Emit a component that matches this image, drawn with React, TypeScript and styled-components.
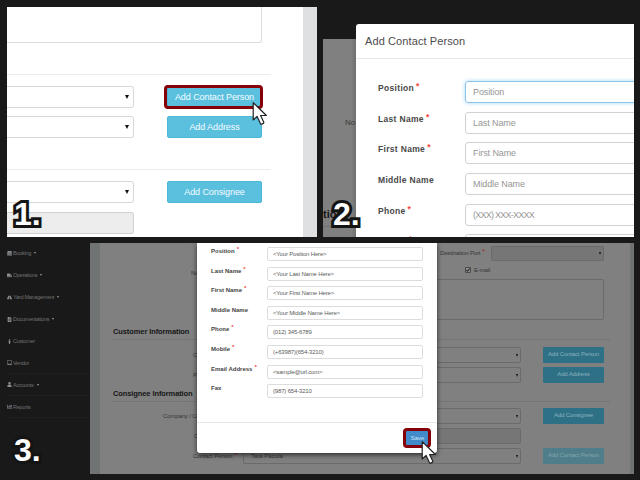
import React from "react";
import styled, { createGlobalStyle, css } from "styled-components";
import {
  FaBook,
  FaTruck,
  FaRoad,
  FaFileAlt,
  FaMale,
  FaTabletAlt,
  FaUser,
  FaChartBar,
} from "react-icons/fa";

const GlobalStyle = createGlobalStyle`
  * { box-sizing: border-box; }
  body { margin: 0; background: #191919; font-family: "Liberation Sans", Arial, sans-serif; }
`;

const Page = styled.main`
  width: 640px;
  height: 480px;
  padding: 7px 6px 6px 7px;
  background: #191919;
  display: grid;
  grid-template-rows: 230px 231px;
  row-gap: 6px;
  overflow: hidden;
`;

const TopSteps = styled.div`
  display: grid;
  grid-template-columns: 310px 311px;
  column-gap: 6px;
`;

const StepNumber = styled.span<{ $left: number; $top: number }>`
  position: absolute;
  left: ${(p) => p.$left}px;
  top: ${(p) => p.$top}px;
  font-size: 32px;
  line-height: 32px;
  font-weight: bold;
  color: #fff;
  -webkit-text-stroke: 6px #141414;
  paint-order: stroke fill;
  stroke-linejoin: round;
`;

const CursorSvg = styled.svg<{ $left: number; $top: number }>`
  position: absolute;
  left: ${(p) => p.$left}px;
  top: ${(p) => p.$top}px;
  width: 16px;
  height: 25px;
`;

const Cursor = ({ left, top }: { left: number; top: number }) => (
  <CursorSvg $left={left} $top={top} viewBox="0 0 16 25">
    <path
      d="M1.2 1.6V19l3.9-3.6 3.3 7.2q.5.9 1.4.5l1.5-.7q.8-.5.4-1.4l-3.1-6.5h5.8z"
      fill="#fff"
      stroke="#222"
      strokeWidth="1.2"
      strokeLinejoin="round"
    />
  </CursorSvg>
);

const Highlight = styled.div<{ $left: number; $top: number; $w: number; $h: number }>`
  position: absolute;
  left: ${(p) => p.$left}px;
  top: ${(p) => p.$top}px;
  width: ${(p) => p.$w}px;
  height: ${(p) => p.$h}px;
  border: 3px solid #860008;
  border-radius: 4px;
`;

/* Step 1: order form */

const FormCrop = styled.section`
  position: relative;
  display: grid;
  grid-template-columns: 296px 14px;
  background: #fff;
  overflow: hidden;
`;

const PageGutter = styled.div`
  background: #dfe0e2;
`;

const FormBody = styled.div`
  display: flex;
  flex-direction: column;
`;

const NotesBox = styled.div`
  width: 255px;
  height: 36px;
  border: solid #ddd;
  border-width: 0 1px 1px 0;
  border-radius: 0 0 3px 0;
`;

const Rule = styled.div<{ $gap: number }>`
  width: 264px;
  height: 1px;
  margin-top: ${(p) => p.$gap}px;
  background: #ebebeb;
`;

const FormRow = styled.div<{ $gap: number }>`
  display: grid;
  grid-template-columns: 127px 95px;
  column-gap: 33px;
  height: 22px;
  margin-top: ${(p) => p.$gap}px;
`;

const SelectBox = styled.div<{ $disabled?: boolean }>`
  display: flex;
  align-items: center;
  justify-content: flex-end;
  padding-right: 4px;
  border: 1px solid ${(p) => (p.$disabled ? "#d0d0d0" : "#d8d8d8")};
  border-left: 0;
  border-radius: 0 3px 3px 0;
  background: ${(p) => (p.$disabled ? "#ededed" : "#fff")};
`;

const Arrow = styled.span<{ $size: number }>`
  border: solid transparent;
  border-width: ${(p) => p.$size}px ${(p) => p.$size / 2}px 0;
  border-top-color: #111;
`;

const InfoButton = styled.div`
  display: flex;
  align-items: center;
  justify-content: center;
  border: 1px solid #4bb8d8;
  border-radius: 2px;
  background: #5bc0de;
  color: #f4fcff;
  font-size: 9px;
  letter-spacing: -0.08px;
  white-space: nowrap;
`;

/* Step 2: empty dialog */

const DialogCrop = styled.section`
  position: relative;
  display: grid;
  grid-template-columns: 33px 278px;
  overflow: hidden;
`;

const DimmedEdge = styled.div`
  margin-top: 32px;
  display: flex;
  flex-direction: column;
  overflow: hidden;
  background: linear-gradient(90deg, #808080 85%, #707070);
  color: #3a3a3a;
`;

const EdgeLabel = styled.div`
  margin: 78px 0 0 22px;
  font-size: 8px;
  line-height: 12px;
`;

const EdgeHeading = styled.div`
  margin-top: 79px;
  padding-bottom: 5px;
  border-bottom: 1px solid #727272;
  color: #151515;
  font-size: 11px;
  line-height: 13px;
  font-weight: bold;
`;

const Dialog = styled.div`
  margin-top: 17px;
  border-radius: 3px 0 0 0;
  background: #fff;
  overflow: hidden;
`;

const DialogTitle = styled.div`
  height: 35px;
  padding: 0 9px;
  border-bottom: 1px solid #e8e8e8;
  color: #4c4c4c;
  font-size: 11px;
  line-height: 35px;
  letter-spacing: 0.1px;
`;

const DialogFields = styled.div`
  padding: 22px 0 0 22px;
`;

const DialogRow = styled.div`
  display: grid;
  grid-template-columns: 87px 180px;
  height: 30.7px;
`;

const DialogLabel = styled.div`
  padding-top: 1px;
  color: #484848;
  font-size: 8.5px;
  line-height: 13px;
  font-weight: bold;
  letter-spacing: 0.32px;
`;

const Star = styled.sup`
  margin-left: 2px;
  color: #f4443c;
  font-size: 1em;
  line-height: 0;
  vertical-align: 2px;
  font-weight: bold;
`;

const DialogInput = styled.div<{ $focus?: boolean; $tight?: boolean }>`
  height: 22px;
  padding-left: 7px;
  border: 1px solid #d2d2d2;
  border-radius: 3px;
  color: #969696;
  font-size: 9px;
  line-height: 20px;
  letter-spacing: ${(p) => (p.$tight ? "-0.75px" : "-0.1px")};
  ${(p) =>
    p.$focus &&
    css`
      border-color: #8cc4ee;
      box-shadow: 0 0 4px #a8d6f5;
    `}
`;

const emptyFields = [
  { label: "Position", hint: "Position", required: true },
  { label: "Last Name", hint: "Last Name", required: true },
  { label: "First Name", hint: "First Name", required: true },
  { label: "Middle Name", hint: "Middle Name", required: false },
  { label: "Phone", hint: "(XXX) XXX-XXXX", required: true, tight: true },
  { label: "Mobile", hint: "", required: true },
];

/* Step 3: filled dialog over the full page */

const AppShell = styled.section`
  position: relative;
  display: grid;
  grid-template-columns: 83px 544px;
`;

const Sidebar = styled.nav`
  color: #707070;
  font-size: 5.6px;
  letter-spacing: -0.3px;
`;

const NavItem = styled.div<{ $line?: boolean }>`
  display: flex;
  align-items: center;
  gap: 1px;
  height: 21.9px;
  border-bottom: 1px solid ${(p) => (p.$line ? "#1f1f1f" : "transparent")};
  white-space: nowrap;
  svg {
    height: 5px;
    width: auto;
    flex: none;
    color: #8a8a8a;
  }
`;

const Caret = styled.i`
  margin-left: 2px;
  border: 2px solid transparent;
  border-width: 2px 1.5px 0;
  border-top-color: #999;
`;

const navItems = [
  { label: "Booking", icon: FaBook, menu: true },
  { label: "Operations", icon: FaTruck, menu: true },
  { label: "Yard Management", icon: FaRoad, menu: true },
  { label: "Documentations", icon: FaFileAlt, menu: true },
  { label: "Customer", icon: FaMale },
  { label: "Vendor", icon: FaTabletAlt, line: true },
  { label: "Accounts", icon: FaUser, menu: true, line: true },
  { label: "Reports", icon: FaChartBar, line: true },
];

const Screen = styled.div`
  position: relative;
  display: grid;
  grid-template-columns: 10px 530px 4px;
  background: #808080;
  overflow: hidden;
`;

const Gutter = styled.div`
  background: #707373;
`;

const DimForm = styled.div`
  padding: 3px 0 0 13px;
  color: #363636;
  font-size: 6px;
  letter-spacing: -0.15px;
  white-space: nowrap;
`;

const PortRow = styled.div`
  display: grid;
  grid-template-columns: 51px 113px;
  padding-left: 327px;
  height: 14px;
  line-height: 15px;
`;

const MailRow = styled.div`
  display: flex;
  align-items: center;
  gap: 3px;
  margin-top: 4px;
  padding-left: 352px;
  height: 12px;
`;

const Check = styled.span`
  display: flex;
  width: 6px;
  height: 6px;
  border: 1px solid #4a4a4a;
  background: #8c8c8c;
  border-radius: 1px;
  svg {
    width: 4px;
    height: 4px;
  }
`;

const RemarksRow = styled.div`
  display: grid;
  grid-template-columns: 130px 361px;
  height: 41px;
  margin-top: 3px;
`;

const RemarksLabel = styled.span`
  padding-left: 78px;
  margin-top: -11px;
  line-height: 10px;
`;

const DimBox = styled.div<{ $disabled?: boolean }>`
  display: flex;
  align-items: center;
  justify-content: space-between;
  padding: 0 2px 0 7px;
  border: 1px solid #6b6b6b;
  border-radius: 2px;
  background: ${(p) => (p.$disabled ? "#767676" : "transparent")};
  letter-spacing: 0.05px;
`;

const DimHeading = styled.div<{ $gap: number }>`
  width: 497px;
  height: 14px;
  margin-top: ${(p) => p.$gap}px;
  border-bottom: 1px solid #757575;
  color: #161616;
  font-size: 7.5px;
  line-height: 12px;
  letter-spacing: -0.1px;
  font-weight: bold;
`;

const DimRow = styled.div<{ $gap: number }>`
  display: grid;
  grid-template-columns: 130px 278px 22px 61px;
  height: 14px;
  margin-top: ${(p) => p.$gap}px;
`;

const DimLabel = styled.div<{ $indent: number }>`
  padding-left: ${(p) => p.$indent}px;
  line-height: 16px;
`;

const DimStar = styled.sup`
  margin-left: 2px;
  color: #a11f1c;
  font-size: 7px;
  line-height: 0;
  vertical-align: 1px;
`;

const DimButton = styled.div<{ $faded?: boolean }>`
  grid-column: 4;
  display: flex;
  align-items: center;
  justify-content: center;
  padding-bottom: 2px;
  border-radius: 1px;
  background: ${(p) => (p.$faded ? "#4f7d89" : "#2e7187")};
  color: ${(p) => (p.$faded ? "#86a5ad" : "#8bb0bb")};
  font-size: 6px;
`;

const FilledDialog = styled.div`
  position: absolute;
  left: 107px;
  top: 0;
  width: 240px;
  height: 210px;
  display: flex;
  flex-direction: column;
  background: #fff;
  border-radius: 0 0 3px 3px;
  box-shadow: 0 2px 5px rgba(0, 0, 0, 0.65);
`;

const FilledFields = styled.div`
  height: 180px;
  padding: 4px 0 0 14px;
  border-bottom: 1px solid #e8e8e8;
`;

const FilledRow = styled.div`
  display: grid;
  grid-template-columns: 56px 156px;
  height: 19.6px;
`;

const FilledLabel = styled.div`
  color: #444;
  font-size: 6px;
  line-height: 8px;
  font-weight: bold;
  white-space: nowrap;
`;

const FilledInput = styled.div`
  height: 14px;
  padding-left: 5px;
  border: 1px solid #dcdcdc;
  border-radius: 2px;
  color: #5c5c5c;
  font-size: 6px;
  line-height: 12px;
  letter-spacing: -0.17px;
`;

const FilledFooter = styled.div`
  display: flex;
  justify-content: flex-end;
  padding: 8px 8px 0 0;
`;

const SaveButton = styled.div`
  width: 23px;
  height: 14px;
  background: #428bca;
  color: #cfe6f8;
  font-size: 6px;
  line-height: 15px;
  text-align: center;
`;

const filledFields = [
  { label: "Position", value: "<Your Position Here>", required: true },
  { label: "Last Name", value: "<Your Last Name Here>", required: true },
  { label: "First Name", value: "<Your First Name Here>", required: true },
  { label: "Middle Name", value: "<Your Middle Name Here>", required: false },
  { label: "Phone", value: "(012) 345-6789", required: true },
  { label: "Mobile", value: "(+63987)(654-3210)", required: true },
  { label: "Email Address", value: "<sample@url.com>", required: true },
  { label: "Fax", value: "(987) 654-3210", required: false },
];

const StepOne = () => (
  <FormCrop>
    <FormBody>
      <NotesBox />
      <Rule $gap={31} />
      <FormRow $gap={11}>
        <SelectBox><Arrow $size={4} /></SelectBox>
        <InfoButton>Add Contact Person</InfoButton>
      </FormRow>
      <FormRow $gap={8}>
        <SelectBox><Arrow $size={4} /></SelectBox>
        <InfoButton>Add Address</InfoButton>
      </FormRow>
      <Rule $gap={31} />
      <FormRow $gap={11}>
        <SelectBox><Arrow $size={4} /></SelectBox>
        <InfoButton>Add Consignee</InfoButton>
      </FormRow>
      <FormRow $gap={9}>
        <SelectBox $disabled />
      </FormRow>
    </FormBody>
    <PageGutter />
    <Highlight $left={157} $top={78} $w={99} $h={24} />
    <Cursor left={245} top={94} />
    <StepNumber $left={7} $top={191}>1.</StepNumber>
  </FormCrop>
);

const StepTwo = () => (
  <DialogCrop>
    <DimmedEdge>
      <EdgeLabel>No</EdgeLabel>
      <EdgeHeading>tion</EdgeHeading>
    </DimmedEdge>
    <Dialog>
      <DialogTitle>Add Contact Person</DialogTitle>
      <DialogFields>
        {emptyFields.map((f, i) => (
          <DialogRow key={f.label}>
            <DialogLabel>
              {f.label}
              {f.required && <Star>*</Star>}
            </DialogLabel>
            <DialogInput $focus={i === 0} $tight={f.tight}>{f.hint}</DialogInput>
          </DialogRow>
        ))}
      </DialogFields>
    </Dialog>
    <StepNumber $left={10} $top={191}>2.</StepNumber>
  </DialogCrop>
);

const StepThree = () => (
  <AppShell>
    <Sidebar>
      {navItems.map(({ label, icon: Icon, menu, line }) => (
        <NavItem key={label} $line={line}>
          <Icon />
          {label}
          {menu && <Caret />}
        </NavItem>
      ))}
    </Sidebar>
    <Screen>
      <Gutter />
      <DimForm>
        <PortRow>
          <span>Destination Port<DimStar>*</DimStar></span>
          <DimBox $disabled><span /><Arrow $size={3} /></DimBox>
        </PortRow>
        <MailRow>
          <Check>
            <svg viewBox="0 0 4 4"><path d="M.5 2l1 1.3L3.6.5" fill="none" stroke="#111" /></svg>
          </Check>
          E-mail
        </MailRow>
        <RemarksRow>
          <RemarksLabel>No</RemarksLabel>
          <DimBox />
        </RemarksRow>
        <DimHeading $gap={6}>Customer Information</DimHeading>
        <DimRow $gap={7}>
          <DimLabel $indent={80}>Co</DimLabel>
          <DimBox><span /><Arrow $size={3} /></DimBox>
          <DimButton>Add Contact Person</DimButton>
        </DimRow>
        <DimRow $gap={6}>
          <DimLabel $indent={80}>Pr</DimLabel>
          <DimBox><span /><Arrow $size={3} /></DimBox>
          <DimButton>Add Address</DimButton>
        </DimRow>
        <DimHeading $gap={7}>Consignee Information</DimHeading>
        <DimRow $gap={6}>
          <DimLabel $indent={50}>Company / Con</DimLabel>
          <DimBox><span /><Arrow $size={3} /></DimBox>
          <DimButton>Add Consignee</DimButton>
        </DimRow>
        <DimRow $gap={6}>
          <DimLabel $indent={81}>C</DimLabel>
          <DimBox $disabled />
        </DimRow>
        <DimRow $gap={6}>
          <DimLabel $indent={80}>Contact Person<DimStar>*</DimStar></DimLabel>
          <DimBox>Tata Pacula<Arrow $size={3} /></DimBox>
          <DimButton $faded>Add Contact Person</DimButton>
        </DimRow>
      </DimForm>
      <Gutter />
      <FilledDialog>
        <FilledFields>
          {filledFields.map((f) => (
            <FilledRow key={f.label}>
              <FilledLabel>
                {f.label}
                {f.required && <Star>*</Star>}
              </FilledLabel>
              <FilledInput>{f.value}</FilledInput>
            </FilledRow>
          ))}
        </FilledFields>
        <FilledFooter>
          <SaveButton>Save</SaveButton>
        </FilledFooter>
      </FilledDialog>
      <Highlight $left={313} $top={185} $w={28} $h={20} />
      <Cursor left={331} top={197} />
    </Screen>
    <StepNumber $left={7} $top={191}>3.</StepNumber>
  </AppShell>
);

export default function App() {
  return (
    <>
      <GlobalStyle />
      <Page>
        <TopSteps>
          <StepOne />
          <StepTwo />
        </TopSteps>
        <StepThree />
      </Page>
    </>
  );
}
